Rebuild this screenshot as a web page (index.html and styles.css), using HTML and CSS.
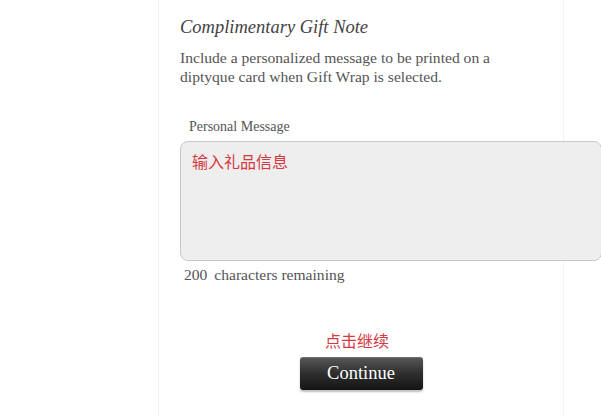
FILE: index.html
```html
<!DOCTYPE html>
<html>
<head>
<meta charset="utf-8">
<link rel="stylesheet" href="styles.css">
</head>
<body>
<div class="page">
  <div class="panel">
    <h2 class="title">Complimentary Gift Note</h2>
    <p class="desc">Include a personalized message to be printed on a<br>diptyque card when Gift Wrap is selected.</p>
    <label class="label">Personal Message</label>
    <div class="textarea"><span class="hint">输入礼品信息</span></div>
    <div class="remaining"><span class="count">200</span> characters remaining</div>
    <div class="actions">
      <div class="hint2">点击继续</div>
      <button class="btn">Continue</button>
    </div>
  </div>
</div>
</body>
</html>
```
FILE: styles.css
```css
html, body {
  margin: 0;
  padding: 0;
  background: #fff;
  overflow: hidden;
}
.page {
  width: 601px;
  height: 416px;
  overflow: hidden;
}
.panel {
  margin-left: 158px;
  width: 383px;
  height: 416px;
  border-left: 1px solid #f3f3f3;
  border-right: 1px solid #f3f3f3;
  padding-left: 21px;
  box-sizing: content-box;
  font-family: "Liberation Serif", "DejaVu Serif", serif;
  color: #555;
}
.title {
  margin: 0;
  padding-top: 16px;
  font-size: 18.5px;
  font-weight: normal;
  font-style: italic;
  color: #444;
  line-height: 22px;
}
.desc {
  margin: 10px 0 0 0;
  font-size: 15.6px;
  line-height: 19px;
  color: #555;
  white-space: nowrap;
}
.label {
  display: block;
  margin-top: 33px;
  padding-left: 9px;
  font-size: 14px;
  line-height: 16px;
  color: #555;
}
.textarea {
  margin-top: 6px;
  width: 422px;
  height: 120px;
  box-sizing: border-box;
  background: #eeeeee;
  border: 1px solid #c8c8c8;
  border-radius: 8px;
  padding: 9px 11px;
}
.hint {
  font-family: "Noto Sans CJK SC", sans-serif;
  font-size: 16px;
  line-height: 20px;
  color: #d5393f;
}
.remaining {
  margin-top: 5px;
  padding-left: 4px;
  font-size: 15.6px;
  line-height: 18px;
  color: #555;
  white-space: nowrap;
}
.count { margin-right: 3px; }
.actions {
  display: flex;
  flex-direction: column;
  align-items: center;
  margin-top: 46px;
  width: 362px;
}
.hint2 {
  font-family: "Noto Sans CJK SC", sans-serif;
  font-size: 16px;
  line-height: 20px;
  color: #d5393f;
  padding-right: 8px;
}
.btn {
  margin-top: 7px;
  width: 123px;
  height: 33px;
  border: none;
  border-radius: 3px;
  background: linear-gradient(#595959, #2e2e2e 50%, #141414);
  box-shadow: 0 2px 2px rgba(0,0,0,0.25), inset 0 1px 0 rgba(255,255,255,0.15);
  color: #fff;
  font-family: "Liberation Serif", "DejaVu Serif", serif;
  font-size: 18.5px;
  padding: 0;
}
```
